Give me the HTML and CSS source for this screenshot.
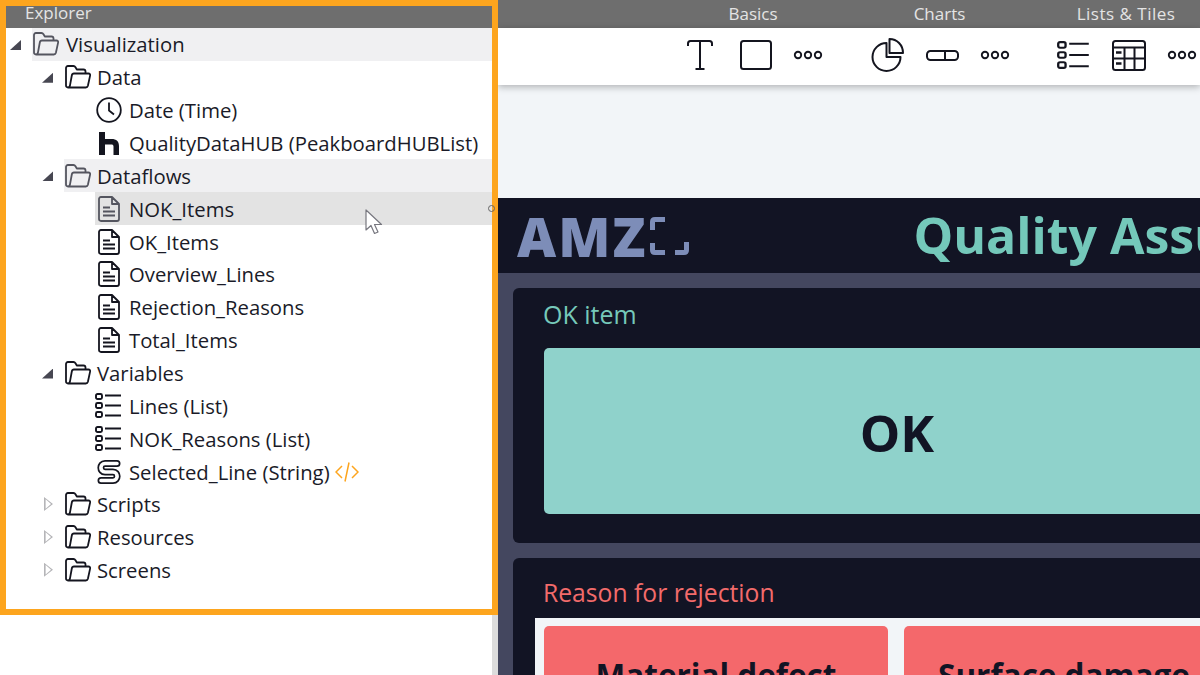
FILE: index.html
```html
<!DOCTYPE html>
<html lang="en">
<head>
<meta charset="utf-8">
<title>Explorer</title>
<link rel="stylesheet" href="styles.css">
</head>
<body>
<svg class="defs" width="0" height="0" aria-hidden="true">
  <symbol id="folder" viewBox="0 0 26 24"><path d="M3 22.5C1.8 22.500 1 21.700 1 20.500V3C1 1.800 1.800 1 3 1H8.500C9.500 1 10 1.500 10.500 2.300L11.800 4.500H18.500C19.800 4.500 20.500 5.300 20.500 6.500V8.500M3 22.500C4 22.500 4.600 21.900 4.900 20.800L6.800 10.500C7 9.300 7.700 8.500 9 8.500H23.500C24.700 8.500 25.400 9.400 25.100 10.600L22.900 20.800C22.600 21.900 21.900 22.500 20.800 22.500Z" fill="none" stroke="currentColor" stroke-width="1.800" stroke-linejoin="round"/></symbol>
  <symbol id="doc" viewBox="0 0 22 26"><path d="M3 1H14L21 8V23C21 24.200 20.200 25 19 25H3C1.800 25 1 24.200 1 23V3C1 1.800 1.800 1 3 1ZM14 1V8H21M5 11.500H12M5 15.500H17M5 19.500H17" fill="none" stroke="currentColor" stroke-width="1.800" stroke-linejoin="round"/></symbol>
  <symbol id="list" viewBox="0 0 27 25" preserveAspectRatio="none"><g fill="none" stroke="currentColor" stroke-width="1.900"><rect x="1" y="1" width="6" height="5" rx="1.500"/><rect x="1" y="10" width="6" height="5" rx="1.500"/><rect x="1" y="19" width="6" height="5" rx="1.500"/><path d="M10 2.500H26M10 12.500H26M10 22.500H26"/></g></symbol>
  <symbol id="dots" viewBox="0 0 30 10"><g fill="none" stroke="currentColor" stroke-width="1.900"><circle cx="5" cy="5" r="3.200"/><circle cx="15" cy="5" r="3.200"/><circle cx="25" cy="5" r="3.200"/></g></symbol>
</svg>

<main class="app">
  <section class="left">
    <div class="explorer">
      <header class="explorer-title">Explorer</header>
      <div class="row l0"><span class="twisty open"></span><div class="body soft"><svg class="ic folder dim"><use href="#folder"/></svg><span>Visualization</span></div></div>
      <div class="row l1"><span class="twisty open"></span><div class="body"><svg class="ic folder"><use href="#folder"/></svg><span>Data</span></div></div>
      <div class="row l2"><div class="body"><svg class="ic clock" viewBox="0 0 26 26"><circle cx="13" cy="13" r="11.800" fill="none" stroke="currentColor" stroke-width="1.800"/><path d="M13 5.500V13.500L18 17.500" fill="none" stroke="currentColor" stroke-width="1.800"/></svg><span>Date (Time)</span></div></div>
      <div class="row l2"><div class="body"><svg class="ic hub" viewBox="0 0 20 23"><path d="M0 0H6V23H0ZM6 7H12.500C17.500 7 20 9.500 20 14V23H14.500V14.500C14.500 13 13.500 12.500 12.500 12.500H6Z" fill="currentColor"/></svg><span>QualityDataHUB (PeakboardHUBList)</span></div></div>
      <div class="row l1"><span class="twisty open"></span><div class="body soft"><svg class="ic folder dim"><use href="#folder"/></svg><span>Dataflows</span></div></div>
      <div class="row l2"><div class="body hover"><svg class="ic doc dim"><use href="#doc"/></svg><span>NOK_Items</span><i class="grip"></i></div></div>
      <div class="row l2"><div class="body"><svg class="ic doc"><use href="#doc"/></svg><span>OK_Items</span></div></div>
      <div class="row l2"><div class="body"><svg class="ic doc"><use href="#doc"/></svg><span>Overview_Lines</span></div></div>
      <div class="row l2"><div class="body"><svg class="ic doc"><use href="#doc"/></svg><span>Rejection_Reasons</span></div></div>
      <div class="row l2"><div class="body"><svg class="ic doc"><use href="#doc"/></svg><span>Total_Items</span></div></div>
      <div class="row l1"><span class="twisty open"></span><div class="body"><svg class="ic folder"><use href="#folder"/></svg><span>Variables</span></div></div>
      <div class="row l2"><div class="body"><svg class="ic list"><use href="#list"/></svg><span>Lines (List)</span></div></div>
      <div class="row l2"><div class="body"><svg class="ic list"><use href="#list"/></svg><span>NOK_Reasons (List)</span></div></div>
      <div class="row l2"><div class="body"><svg class="ic str" viewBox="0 0 24 26"><path d="M20 4.500H8C2.500 4.500 2.500 13 8 13H16C21.500 13 21.500 21.500 16 21.500H4" fill="none" stroke="#14151f" stroke-width="7" stroke-linecap="round"/><path d="M20 4.500H8C2.500 4.500 2.500 13 8 13H16C21.500 13 21.500 21.500 16 21.500H4" fill="none" stroke="#fff" stroke-width="3.600" stroke-linecap="round"/></svg><span>Selected_Line (String)</span><svg class="code" viewBox="0 0 24 20"><path d="M7 4L1 10L7 16M17 4L23 10L17 16M14 0.500L10 19.500" fill="none" stroke="currentColor" stroke-width="1.500"/></svg></div></div>
      <div class="row l1"><span class="twisty closed"></span><div class="body"><svg class="ic folder"><use href="#folder"/></svg><span>Scripts</span></div></div>
      <div class="row l1"><span class="twisty closed"></span><div class="body"><svg class="ic folder"><use href="#folder"/></svg><span>Resources</span></div></div>
      <div class="row l1"><span class="twisty closed"></span><div class="body"><svg class="ic folder"><use href="#folder"/></svg><span>Screens</span></div></div>
    </div>
    <svg class="cursor" viewBox="0 0 18 26"><path d="M1 1V21L6 16.500L9.500 24.500L13 23L9.500 15.500H16.500Z" fill="#fff" stroke="#77777f" stroke-width="1.200" stroke-linejoin="round"/></svg>
  </section>

  <section class="right">
    <div class="tabs"><span class="tab">Basics</span><span class="tab">Charts</span><span class="tab">Lists &amp; Tiles</span></div>
    <div class="toolbar">
      <svg class="tool t-text" viewBox="0 0 26 30"><path d="M1 6V3.500C1 2 2 1 3.500 1H22.500C24 1 25 2 25 3.500V6M13 1V29M8.500 29H17.500" fill="none" stroke="currentColor" stroke-width="2"/></svg>
      <svg class="tool t-rect" viewBox="0 0 32 30"><rect x="1" y="1" width="30" height="28" rx="2.500" fill="none" stroke="currentColor" stroke-width="2"/></svg>
      <svg class="tool t-dots"><use href="#dots"/></svg>
      <svg class="tool t-pie" viewBox="0 0 33 34"><path d="M15.500 5A14 14 0 1 0 29.500 19H15.500ZM18.500 1V15H32C32 7 26 1 18.500 1Z" fill="none" stroke="currentColor" stroke-width="2" stroke-linejoin="round"/></svg>
      <svg class="tool t-pill" viewBox="0 0 33 11"><rect x="1" y="1" width="31" height="9" rx="3.500" fill="none" stroke="currentColor" stroke-width="2"/><path d="M19 1V10" stroke="currentColor" stroke-width="2"/></svg>
      <svg class="tool t-dots"><use href="#dots"/></svg>
      <svg class="tool t-list"><use href="#list"/></svg>
      <svg class="tool t-table" viewBox="0 0 34 31"><g fill="none" stroke="currentColor" stroke-width="2"><rect x="1" y="1" width="32" height="29" rx="2.500"/><path d="M1 7.500H33M1 18.500H33M12.500 7.500V30M22.500 7.500V30"/></g><path d="M4 12.500H9.500M4 23.500H9.500" stroke="currentColor" stroke-width="2.500"/></svg>
      <svg class="tool t-dots"><use href="#dots"/></svg>
    </div>
    <div class="gap"></div>
    <div class="screen">
      <header class="screen-head">
        <div class="logo"><span class="logo-text">AMZ</span><svg class="logo-mark" viewBox="0 0 39 38"><path d="M15 2.500H5C3.300 2.500 2.500 3.300 2.500 5V13M2.500 26V33C2.500 34.700 3.300 35.500 5 35.500H15M36.500 25V33C36.500 34.700 35.700 35.500 34 35.500H25" fill="none" stroke="currentColor" stroke-width="5"/></svg></div>
        <h1 class="title">Quality Assurance</h1>
      </header>
      <div class="panel panel-ok">
        <h2 class="panel-title ok">OK item</h2>
        <button class="ok-btn">OK</button>
      </div>
      <div class="panel panel-nok">
        <h2 class="panel-title nok">Reason for rejection</h2>
        <div class="reasons">
          <div class="reason">Material defect</div>
          <div class="reason">Surface damage</div>
        </div>
      </div>
    </div>
  </section>
</main>
</body>
</html>
```
FILE: styles.css
```css
* { box-sizing: border-box; }
html, body { margin: 0; height: 100%; overflow: hidden; background: #fff; }
body { font-family: "Open Sans", "Noto Sans", sans-serif; color: #1a1b28; }
.defs { position: absolute; }

.app { display: flex; width: 1200px; height: 675px; overflow: hidden; }

.left { position: relative; flex: 0 0 498px; min-width: 0; height: 675px; border-right: 6px solid #dcdcdc; }
.explorer { width: 498px; height: 615px; border: 6px solid #fda51e; background: #fff; }
.explorer-title { height: 22px; background: #6e6e6e; color: #e4e4e4; font-size: 17px; line-height: 14px; padding-left: 19px; overflow: hidden; }

.row { display: flex; height: 32.87px; align-items: stretch; }
.l0 { padding-left: 0; }
.l0 .folder { margin-right: 7px; }
.l1 { padding-left: 32px; }
.l2 { padding-left: 89px; }
.twisty { flex: 0 0 26px; position: relative; }
.twisty::before { content: ""; position: absolute; }
.twisty.open::before { left: 4px; top: 12px; width: 11px; height: 10px; background: #474752; clip-path: polygon(100% 0, 100% 100%, 0 100%); }
.twisty.closed::before { left: 6px; top: 9px; width: 9px; height: 14px; background: #b5b5b8; clip-path: polygon(0 0, 100% 50%, 0 100%, 0 0, 18% 16%, 18% 84%, 78% 50%, 18% 16%); }

.body { position: relative; flex: 1; display: flex; align-items: center; font-size: 20.300px; line-height: 32px; white-space: nowrap; min-width: 0; }
.soft { background: #f0f0f2; }
.hover { background: #e3e3e3; }
.ic { flex: none; color: #14151f; }
.dim { color: #54555f; }
.folder { width: 26px; height: 24px; margin: 0 6px 0 1px; }
.doc { width: 22px; height: 26px; margin: 0 9px 0 3px; }
.clock { width: 26px; height: 26px; margin: 0 7px 0 1px; }
.hub { width: 20px; height: 23px; margin: 0 10px 0 4px; }
.list { width: 27px; height: 25px; margin: 0 7px 0 0; }
.str { width: 24px; height: 26px; margin: 0 8px 0 2px; }
.code { width: 24px; height: 20px; margin-left: 5px; color: #fda51e; }
.grip { position: absolute; right: -3px; top: 13px; width: 7px; height: 7px; border: 1.500px solid #666; border-radius: 50%; }
.cursor { position: absolute; left: 365px; top: 209px; width: 18px; height: 26px; }

.right { flex: 0 0 702px; min-width: 0; overflow: hidden; background: #f2f5f8; }
.tabs { height: 28px; background: #6e6e6e; color: #e4e4e4; font-size: 17px; display: flex; gap: 26.500px; padding-left: 175px; line-height: 27px; }
.tab { flex: 0 0 160px; text-align: center; white-space: nowrap; }
.tab:last-child { letter-spacing: .5px; }
.toolbar { height: 57px; padding-bottom: 3px; background: #fff; box-shadow: 0 2px 7px rgba(0,0,0,.28); display: flex; align-items: center; position: relative; color: #14151f; }
.tool { flex: none; }
.t-text { width: 26px; height: 30px; margin-left: 189px; }
.t-rect { width: 32px; height: 30px; margin-left: 27px; }
.t-dots { width: 30px; height: 10px; margin-left: 21px; }
.t-pie { width: 33px; height: 34px; margin-left: 48px; }
.t-pill { width: 33px; height: 11px; margin-left: 22px; }
.t-list { width: 33px; height: 28px; margin-left: 47px; }
.t-table { width: 34px; height: 31px; margin-left: 22px; }

.gap { height: 113px; }
.screen { width: 760px; height: 477px; background: #44475f; padding-left: 15px; }
.screen-head { height: 75px; margin-left: -15px; background: #121424; display: flex; align-items: center; position: relative; padding-left: 19px; }
.logo { display: flex; align-items: center; color: #7d8db8; font: 800 54px/1 "Open Sans", sans-serif; }
.logo-text { letter-spacing: 2px; }
.logo-mark { width: 39px; height: 38px; margin-left: 3px; }
.title { margin: 0 0 0 224px; font: 700 50px/81px "Open Sans", sans-serif; color: #74c8ba; white-space: nowrap; }

.panel { width: 760px; background: #121424; border-radius: 6px 0 0 6px; padding-left: 30px; }
.panel-ok { height: 255px; margin-top: 15px; padding-top: 9px; }
.panel-nok { height: 200px; margin-top: 15px; padding-top: 18px; }
.panel-title { margin: 0; font-weight: 400; line-height: 34px; }
.ok { font-size: 25px; color: #76c9ba; }
.nok { font-size: 24.700px; color: #f26b6b; }
.ok-btn { display: block; margin: 17px 0 0 1px; width: 706px; height: 166px; padding: 1px 0 0; border: 0; border-radius: 5px; background: #8fd2cb; color: #121424; font: 700 51px "Open Sans", sans-serif; }

.reasons { display: flex; gap: 16px; margin: 8px 0 0 -8px; padding: 8px 0 0 9px; width: 800px; height: 100px; background: #f2f5f8; }
.reason { flex: 0 0 344px; height: 90px; border-radius: 5px; background: #f4686b; color: #121424; font: 700 31.500px/98px "Open Sans", sans-serif; text-align: center; white-space: nowrap; }
.reason + .reason { flex-basis: 320px; }
```
